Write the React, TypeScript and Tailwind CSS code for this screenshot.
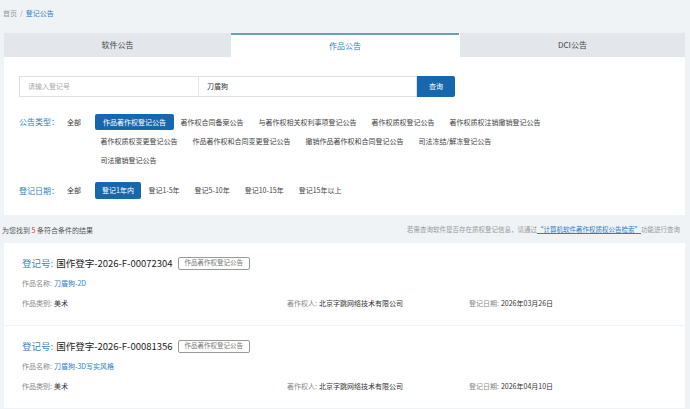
import React from "react";

const typeRows = [
  ["著作权合同备案公告", "与著作权相关权利事项登记公告", "著作权质权登记公告", "著作权质权注销撤销登记公告"],
  ["著作权质权变更登记公告", "作品著作权和合同变更登记公告", "撤销作品著作权和合同登记公告", "司法冻结/解冻登记公告"],
  ["司法撤销登记公告"],
];

const dates = ["登记1-5年", "登记5-10年", "登记10-15年", "登记15年以上"];

const results = [
  { no: "国作登字-2026-F-00072304", name: "刀盾狗-2D", date: "2026年03月26日" },
  { no: "国作登字-2026-F-00081356", name: "刀盾狗-3D写实风格", date: "2026年04月10日" },
];

const App = () => {
  return (
    <div className="w-[690px] h-[409px] overflow-hidden bg-[#f0f3f6] font-['Noto_Sans_CJK_SC','Noto_Sans',sans-serif] text-[#555]">
      {/* breadcrumb */}
      <div className="h-[33px] pl-[3px] pt-[7px] text-[7px] leading-[12px]">
        <span className="text-[#999]">首页</span>
        <span className="text-[#999] mx-[3px]">/</span>
        <span className="text-[#2f7fc1]">登记公告</span>
      </div>

      {/* tabs + filter panel */}
      <div className="ml-[4px] mr-[5px] bg-white">
        <div className="flex h-[24px] text-[8px]">
          <div className="w-[227px] flex items-center justify-center bg-[#e3e7eb] text-[#444]">软件公告</div>
          <div className="w-[228px] flex items-center justify-center bg-white border-t-2 border-[#6d9cb9] text-[#2f7fc1]">作品公告</div>
          <div className="flex-1 ml-[1px] flex items-center justify-center bg-[#e3e7eb] text-[#444]">DCI公告</div>
        </div>

        <div className="px-[15px] pt-[19px] pb-[16px]">
          {/* search */}
          <div className="flex h-[21px] w-[436px]">
            <div className="flex flex-1 border border-[#dcdfe4] text-[7px]">
              <div className="w-[179px] flex items-center pl-[8px] text-[#aaa] border-r border-[#e4e6ea]">请输入登记号</div>
              <div className="flex-1 flex items-center pl-[8px] text-[#333]">刀盾狗</div>
            </div>
            <div className="w-[38px] bg-[#1767ad] rounded-r-[2px] flex items-center justify-center text-white text-[7px]">查询</div>
          </div>

          {/* type filter */}
          <div className="flex mt-[17px] text-[7px]">
            <div className="w-[48px] h-[16px] flex items-center text-[#2f7fc1] text-[8px]">公告类型：</div>
            <div className="w-[28px] h-[16px] flex items-center text-[#333]">全部</div>
            <div className="flex-1 flex flex-col gap-y-[3px]">
              {typeRows.map((row, ri) => (
                <div key={ri} className={`flex ${ri > 0 ? "-ml-[2px]" : ""}`}>
                  {ri === 0 && (
                    <div className="h-[16px] px-[8px] mr-[-1px] flex items-center bg-[#1767ad] text-white rounded-[2px]">作品著作权登记公告</div>
                  )}
                  {row.map((t) => (
                    <div key={t} className="h-[16px] px-[7.5px] flex items-center text-[#444]">{t}</div>
                  ))}
                </div>
              ))}
            </div>
          </div>

          {/* date filter */}
          <div className="flex mt-[14px] text-[7px]">
            <div className="w-[48px] h-[17px] flex items-center text-[#2f7fc1] text-[8px]">登记日期：</div>
            <div className="w-[28px] h-[17px] flex items-center text-[#333]">全部</div>
            <div className="flex">
              <div className="h-[17px] px-[7px] flex items-center bg-[#1767ad] text-white rounded-[2px]">登记1年内</div>
              {dates.map((d) => (
                <div key={d} className="h-[17px] px-[7.5px] flex items-center text-[#444]">{d}</div>
              ))}
            </div>
          </div>
        </div>
      </div>

      {/* result summary strip */}
      <div className="flex items-center justify-between h-[26px] pl-[2px] pr-[10px] mt-[2px]">
        <div className="text-[#555] text-[7px]">
          为您找到 <span className="text-[#d33]">5</span> 条符合条件的结果
        </div>
        <div className="text-[#999] text-[6.5px]">
          若需查询软件是否存在质权登记信息，请通过
          <span className="text-[#2f7fc1] underline">“计算机软件著作权质权公告检索”</span>
          功能进行查询
        </div>
      </div>

      {/* results */}
      <div className="ml-[4px] mr-[5px] flex flex-col gap-[1px]">
        {results.map((r) => (
          <div key={r.no} className="bg-white h-[82px] pl-[18px] pt-[12px]">
            <div className="flex items-center h-[16px]">
              <span className="text-[9.5px] text-[#3a87c6]">登记号:</span>
              <span className="text-[9.5px] text-[#222] ml-[3px]">{r.no}</span>
              <span className="ml-[5px] border border-[#999] rounded-[2px] px-[6px] h-[13px] flex items-center text-[6.5px] text-[#777]">作品著作权登记公告</span>
            </div>
            <div className="mt-[5px] h-[14px] flex items-center text-[7px]">
              <span className="text-[#888]">作品名称:</span>
              <span className="text-[#2f7fc1] ml-[2px]">{r.name}</span>
            </div>
            <div className="mt-[6px] h-[14px] flex items-center text-[7px]">
              <div className="w-[265px]">
                <span className="text-[#888]">作品类别:</span>
                <span className="text-[#333] ml-[2px]">美术</span>
              </div>
              <div className="w-[182px]">
                <span className="text-[#888]">著作权人:</span>
                <span className="text-[#333] ml-[2px]">北京字跳网络技术有限公司</span>
              </div>
              <div>
                <span className="text-[#888]">登记日期:</span>
                <span className="text-[#333] ml-[2px]">{r.date}</span>
              </div>
            </div>
          </div>
        ))}
      </div>
    </div>
  );
};

export default App;
